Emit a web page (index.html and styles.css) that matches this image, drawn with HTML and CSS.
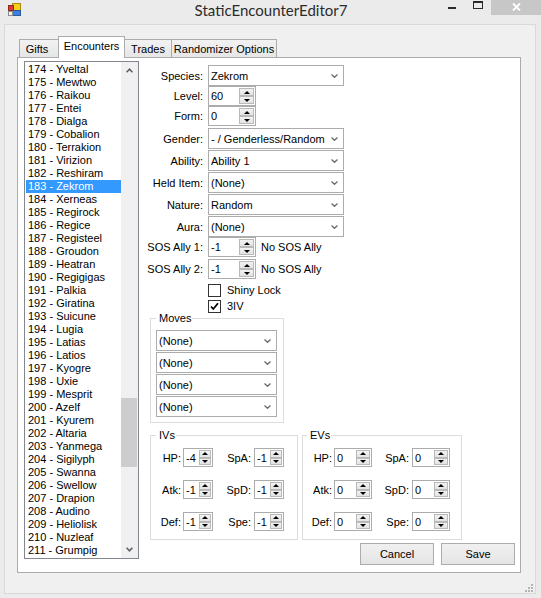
FILE: index.html
```html
<!DOCTYPE html>
<html lang="en">
<head>
<meta charset="utf-8">
<title>StaticEncounterEditor7</title>
<link rel="stylesheet" href="styles.css">
</head>
<body>
<div class="window">
  <div class="titlebar">
    <div class="tb-left">
      <svg class="app-icon" viewBox="0 0 13 13" width="13" height="13">
        <rect x="4.5" y="0.5" width="8" height="7" fill="#f5cf1a" stroke="#a88a10"/>
        <rect x="4.5" y="7.5" width="8" height="5" fill="#3f7fdc" stroke="#2b5aa3"/>
        <rect x="0.5" y="2.5" width="5" height="5" fill="#d83a2e" stroke="#8e2a22"/>
        <rect x="0.5" y="8.5" width="4" height="4" fill="#f2f2f2" stroke="#8a8a8a"/>
      </svg>
    </div>
    <div class="title">StaticEncounterEditor7</div>
    <div class="controls">
      <div class="ctl ctl-min"><span class="min-bar"></span></div>
      <div class="ctl ctl-max"><span class="max-box"></span></div>
      <div class="ctl ctl-close">
        <svg viewBox="0 0 9 8" width="9" height="8"><path d="M1 0.5 L8 7.5 M8 0.5 L1 7.5" stroke="#fff" stroke-width="1.8" fill="none"/></svg>
      </div>
    </div>
  </div>

  <div class="client">
    <div class="tabs">
      <div class="tab tab-gifts">Gifts</div>
      <div class="tab tab-enc active">Encounters</div>
      <div class="tab tab-trades">Trades</div>
      <div class="tab tab-rand">Randomizer Options</div>
    </div>

    <div class="panel">
      <div class="listbox">
        <div class="items">
          <div class="item">174 - Yveltal</div>
          <div class="item">175 - Mewtwo</div>
          <div class="item">176 - Raikou</div>
          <div class="item">177 - Entei</div>
          <div class="item">178 - Dialga</div>
          <div class="item">179 - Cobalion</div>
          <div class="item">180 - Terrakion</div>
          <div class="item">181 - Virizion</div>
          <div class="item">182 - Reshiram</div>
          <div class="item selected">183 - Zekrom</div>
          <div class="item">184 - Xerneas</div>
          <div class="item">185 - Regirock</div>
          <div class="item">186 - Regice</div>
          <div class="item">187 - Registeel</div>
          <div class="item">188 - Groudon</div>
          <div class="item">189 - Heatran</div>
          <div class="item">190 - Regigigas</div>
          <div class="item">191 - Palkia</div>
          <div class="item">192 - Giratina</div>
          <div class="item">193 - Suicune</div>
          <div class="item">194 - Lugia</div>
          <div class="item">195 - Latias</div>
          <div class="item">196 - Latios</div>
          <div class="item">197 - Kyogre</div>
          <div class="item">198 - Uxie</div>
          <div class="item">199 - Mesprit</div>
          <div class="item">200 - Azelf</div>
          <div class="item">201 - Kyurem</div>
          <div class="item">202 - Altaria</div>
          <div class="item">203 - Yanmega</div>
          <div class="item">204 - Sigilyph</div>
          <div class="item">205 - Swanna</div>
          <div class="item">206 - Swellow</div>
          <div class="item">207 - Drapion</div>
          <div class="item">208 - Audino</div>
          <div class="item">209 - Heliolisk</div>
          <div class="item">210 - Nuzleaf</div>
          <div class="item">211 - Grumpig</div>
        </div>
        <div class="scrollbar">
          <div class="sb-btn"><svg viewBox="0 0 7 5" width="7" height="5"><path d="M0.6 4.3 L3.5 1.2 L6.4 4.3" stroke="#606060" stroke-width="1.6" fill="none"/></svg></div>
          <div class="sb-track"><div class="sb-thumb"></div></div>
          <div class="sb-btn"><svg viewBox="0 0 7 5" width="7" height="5"><path d="M0.6 0.7 L3.5 3.8 L6.4 0.7" stroke="#606060" stroke-width="1.6" fill="none"/></svg></div>
        </div>
      </div>

      <div class="editor">
        <div class="row">
          <span class="lbl">Species:</span>
          <div class="combo"><span>Zekrom</span><svg class="chev" viewBox="0 0 7 4" width="7" height="4"><path d="M0.5 0.5 L3.5 3.3 L6.5 0.5" stroke="#6b6b6b" stroke-width="1.3" fill="none"/></svg></div>
        </div>
        <div class="row">
          <span class="lbl">Level:</span>
          <div class="num"><span class="num-val">60</span><span class="spin"><b class="up"><i></i></b><b class="down"><i></i></b></span></div>
        </div>
        <div class="row">
          <span class="lbl">Form:</span>
          <div class="num"><span class="num-val">0</span><span class="spin"><b class="up"><i></i></b><b class="down"><i></i></b></span></div>
        </div>
        <div class="row gap2">
          <span class="lbl">Gender:</span>
          <div class="combo"><span>- / Genderless/Random</span><svg class="chev" viewBox="0 0 7 4" width="7" height="4"><path d="M0.5 0.5 L3.5 3.3 L6.5 0.5" stroke="#6b6b6b" stroke-width="1.3" fill="none"/></svg></div>
        </div>
        <div class="row gap1">
          <span class="lbl">Ability:</span>
          <div class="combo"><span>Ability 1</span><svg class="chev" viewBox="0 0 7 4" width="7" height="4"><path d="M0.5 0.5 L3.5 3.3 L6.5 0.5" stroke="#6b6b6b" stroke-width="1.3" fill="none"/></svg></div>
        </div>
        <div class="row gap1">
          <span class="lbl">Held Item:</span>
          <div class="combo"><span>(None)</span><svg class="chev" viewBox="0 0 7 4" width="7" height="4"><path d="M0.5 0.5 L3.5 3.3 L6.5 0.5" stroke="#6b6b6b" stroke-width="1.3" fill="none"/></svg></div>
        </div>
        <div class="row gap1">
          <span class="lbl">Nature:</span>
          <div class="combo"><span>Random</span><svg class="chev" viewBox="0 0 7 4" width="7" height="4"><path d="M0.5 0.5 L3.5 3.3 L6.5 0.5" stroke="#6b6b6b" stroke-width="1.3" fill="none"/></svg></div>
        </div>
        <div class="row gap1">
          <span class="lbl">Aura:</span>
          <div class="combo"><span>(None)</span><svg class="chev" viewBox="0 0 7 4" width="7" height="4"><path d="M0.5 0.5 L3.5 3.3 L6.5 0.5" stroke="#6b6b6b" stroke-width="1.3" fill="none"/></svg></div>
        </div>
        <div class="row">
          <span class="lbl">SOS Ally 1:</span>
          <div class="num"><span class="num-val">-1</span><span class="spin"><b class="up"><i></i></b><b class="down"><i></i></b></span></div>
          <span class="note">No SOS Ally</span>
        </div>
        <div class="row gap2">
          <span class="lbl">SOS Ally 2:</span>
          <div class="num"><span class="num-val">-1</span><span class="spin"><b class="up"><i></i></b><b class="down"><i></i></b></span></div>
          <span class="note">No SOS Ally</span>
        </div>

        <div class="checks">
          <div class="check"><span class="box"></span><span>Shiny Lock</span></div>
          <div class="check"><span class="box"><svg viewBox="0 0 11 11" width="11" height="11"><path d="M2 5.5 L4.3 8 L9 2.3" stroke="#000" stroke-width="1.8" fill="none"/></svg></span><span>3IV</span></div>
        </div>

        <fieldset class="group moves">
          <legend>Moves</legend>
          <div class="combo move"><span>(None)</span><svg class="chev" viewBox="0 0 7 4" width="7" height="4"><path d="M0.5 0.5 L3.5 3.3 L6.5 0.5" stroke="#6b6b6b" stroke-width="1.3" fill="none"/></svg></div>
          <div class="combo move"><span>(None)</span><svg class="chev" viewBox="0 0 7 4" width="7" height="4"><path d="M0.5 0.5 L3.5 3.3 L6.5 0.5" stroke="#6b6b6b" stroke-width="1.3" fill="none"/></svg></div>
          <div class="combo move"><span>(None)</span><svg class="chev" viewBox="0 0 7 4" width="7" height="4"><path d="M0.5 0.5 L3.5 3.3 L6.5 0.5" stroke="#6b6b6b" stroke-width="1.3" fill="none"/></svg></div>
          <div class="combo move"><span>(None)</span><svg class="chev" viewBox="0 0 7 4" width="7" height="4"><path d="M0.5 0.5 L3.5 3.3 L6.5 0.5" stroke="#6b6b6b" stroke-width="1.3" fill="none"/></svg></div>
        </fieldset>

        <div class="stats">
          <fieldset class="group ivs">
            <legend>IVs</legend>
            <div class="stat-grid">
              <span class="slbl">HP:</span><div class="num small"><span class="num-val">-4</span><span class="spin"><b class="up"><i></i></b><b class="down"><i></i></b></span></div>
              <span class="slbl wide">SpA:</span><div class="num small"><span class="num-val">-1</span><span class="spin"><b class="up"><i></i></b><b class="down"><i></i></b></span></div>
              <span class="slbl">Atk:</span><div class="num small"><span class="num-val">-1</span><span class="spin"><b class="up"><i></i></b><b class="down"><i></i></b></span></div>
              <span class="slbl wide">SpD:</span><div class="num small"><span class="num-val">-1</span><span class="spin"><b class="up"><i></i></b><b class="down"><i></i></b></span></div>
              <span class="slbl">Def:</span><div class="num small"><span class="num-val">-1</span><span class="spin"><b class="up"><i></i></b><b class="down"><i></i></b></span></div>
              <span class="slbl wide">Spe:</span><div class="num small"><span class="num-val">-1</span><span class="spin"><b class="up"><i></i></b><b class="down"><i></i></b></span></div>
            </div>
          </fieldset>
          <fieldset class="group evs">
            <legend>EVs</legend>
            <div class="stat-grid">
              <span class="slbl">HP:</span><div class="num small"><span class="num-val">0</span><span class="spin"><b class="up"><i></i></b><b class="down"><i></i></b></span></div>
              <span class="slbl wide">SpA:</span><div class="num small"><span class="num-val">0</span><span class="spin"><b class="up"><i></i></b><b class="down"><i></i></b></span></div>
              <span class="slbl">Atk:</span><div class="num small"><span class="num-val">0</span><span class="spin"><b class="up"><i></i></b><b class="down"><i></i></b></span></div>
              <span class="slbl wide">SpD:</span><div class="num small"><span class="num-val">0</span><span class="spin"><b class="up"><i></i></b><b class="down"><i></i></b></span></div>
              <span class="slbl">Def:</span><div class="num small"><span class="num-val">0</span><span class="spin"><b class="up"><i></i></b><b class="down"><i></i></b></span></div>
              <span class="slbl wide">Spe:</span><div class="num small"><span class="num-val">0</span><span class="spin"><b class="up"><i></i></b><b class="down"><i></i></b></span></div>
            </div>
          </fieldset>
        </div>

        <div class="buttons">
          <button class="btn" type="button">Cancel</button>
          <button class="btn" type="button">Save</button>
        </div>
      </div>
    </div>

    <div class="footer">
      <svg class="grip" viewBox="0 0 9 9" width="9" height="9">
        <rect x="7" y="1" width="2" height="2" fill="#b4b4b4"/>
        <rect x="4" y="4" width="2" height="2" fill="#b4b4b4"/>
        <rect x="7" y="4" width="2" height="2" fill="#b4b4b4"/>
        <rect x="1" y="7" width="2" height="2" fill="#b4b4b4"/>
        <rect x="4" y="7" width="2" height="2" fill="#b4b4b4"/>
        <rect x="7" y="7" width="2" height="2" fill="#b4b4b4"/>
      </svg>
    </div>
  </div>
</div>
</body>
</html>
```

FILE: styles.css
```css
* { box-sizing: border-box; }
html, body { margin: 0; padding: 0; }
body {
  width: 541px;
  height: 598px;
  overflow: hidden;
  background: #ebebeb;
  font-family: "Liberation Sans", Arial, sans-serif;
  font-size: 11px;
  color: #000;
}

.window {
  width: 541px;
  height: 598px;
  display: flex;
  flex-direction: column;
  background: #ebebeb;
}

/* title bar */
.titlebar {
  height: 24px;
  flex: none;
  display: grid;
  grid-template-columns: 1fr auto 1fr;
  align-items: start;
}
.tb-left { padding: 3px 0 0 8px; }
.app-icon { display: block; }
.title {
  font-family: Lato, "Liberation Sans", sans-serif;
  font-size: 15px;
  line-height: 20px;
  color: #2b2b2b;
  white-space: nowrap;
  padding-left: 1px;
}
.controls { display: flex; justify-content: flex-end; }
.ctl { height: 15px; display: flex; justify-content: center; }
.ctl-min { width: 26px; align-items: center; }
.min-bar { width: 8px; height: 2px; background: #2b2b2b; margin-top: 1px; }
.ctl-max { width: 26px; align-items: flex-start; }
.max-box { width: 10px; height: 8px; border: 1px solid #2b2b2b; border-top-width: 2px; margin-top: 1px; }
.ctl-close { width: 50px; background: #c7c7c7; align-items: center; }
.ctl-close svg { display: block; margin-top: -1px; }

/* client area */
.client {
  flex: 1;
  margin: 0 5px 4px 4px;
  border: 1px solid #d9d9d9;
  background: #f0f0f0;
  padding: 11px 14px 0 12px;
  display: flex;
  flex-direction: column;
}

/* tabs */
.tabs {
  height: 21px;
  flex: none;
  display: flex;
  align-items: flex-end;
  padding-left: 2px;
}
.tab {
  height: 18px;
  border: 1px solid #acacac;
  border-bottom: none;
  background: linear-gradient(#f2f2f2, #e6e6e6);
  display: flex;
  align-items: center;
  justify-content: center;
  padding-top: 1px;
  white-space: nowrap;
}
.tab + .tab { margin-left: -1px; }
.tab-gifts { width: 40px; padding-right: 4px; }
.tab-enc { width: 67px; }
.tab-trades { width: 48px; }
.tab-rand { width: 106px; }
.tab.active {
  height: 22px;
  margin-bottom: -1px;
  background: #fff;
  position: relative;
  z-index: 1;
  padding-top: 0;
  padding-bottom: 3px;
}

/* tab page */
.panel {
  height: 516px;
  flex: none;
  border: 1px solid #acacac;
  background: #fff;
  display: flex;
  align-items: flex-start;
  padding: 3px 0 0 6px;
}

/* list box */
.listbox {
  width: 115px;
  height: 498px;
  flex: none;
  border: 1px solid #828790;
  display: flex;
  background: #fff;
}
.items {
  flex: 1;
  padding: 1px 0 0 1px;
  overflow: hidden;
}
.item {
  height: 13px;
  line-height: 13px;
  padding-left: 2px;
  white-space: nowrap;
}
.item.selected { background: #3399ff; color: #fff; }
.scrollbar {
  width: 17px;
  flex: none;
  background: #f0f0f0;
  display: flex;
  flex-direction: column;
}
.sb-btn {
  height: 17px;
  flex: none;
  display: flex;
  align-items: center;
  justify-content: center;
}
.sb-btn svg { display: block; }
.sb-track { flex: 1; }
.sb-thumb {
  margin: 319px 1px 0 0;
  height: 69px;
  background: #cdcdcd;
}

/* editor column */
.editor {
  flex: 1;
  display: flex;
  flex-direction: column;
  padding-top: 4px;
}
.row {
  display: flex;
  align-items: center;
  gap: 5px;
}
.row.gap1 { margin-top: 1px; }
.row.gap2 { margin-top: 2px; }
.lbl {
  width: 64px;
  flex: none;
  text-align: right;
  white-space: nowrap;
}
.note { white-space: nowrap; }

.combo {
  width: 136px;
  height: 21px;
  border: 1px solid #acacac;
  background: #fff;
  display: flex;
  align-items: center;
  padding-left: 2px;
  white-space: nowrap;
}
.combo .chev { margin-left: auto; margin-right: 5px; display: block; flex: none; }

.num {
  width: 48px;
  height: 20px;
  border: 1px solid #acacac;
  background: #fff;
  display: flex;
}
.num-val {
  flex: 1;
  display: flex;
  align-items: center;
  padding-left: 2px;
}
.spin {
  width: 16px;
  flex: none;
  display: flex;
  flex-direction: column;
  padding: 1px 1px 1px 0;
}
.spin b {
  flex: 1;
  border: 1px solid #b9b9b9;
  background: linear-gradient(#f2f2f2, #e3e3e3);
  display: flex;
  align-items: center;
  justify-content: center;
}
.spin i {
  width: 0;
  height: 0;
  border-left: 3px solid transparent;
  border-right: 3px solid transparent;
}
.spin .up i { border-bottom: 3px solid #000; }
.spin .down i { border-top: 3px solid #000; }

.num.small { width: 30px; height: 19px; }
.num.small .spin { width: 13px; }
.evs .num.small { width: 38px; }
.evs .num.small .spin { width: 15px; }

/* check boxes */
.checks { margin-top: 3px; padding-left: 69px; }
.check {
  height: 16px;
  display: flex;
  align-items: center;
  gap: 6px;
}
.box {
  width: 13px;
  height: 13px;
  border: 1px solid #333;
  background: #fff;
  display: flex;
  align-items: center;
  justify-content: center;
}
.box svg { display: block; }

/* group boxes */
.group {
  margin: 0;
  border: 1px solid #dcdcdc;
  min-width: 0;
}
.group legend {
  padding: 0 1px 0 3px;
  line-height: 13px;
  height: 13px;
}
.moves {
  margin: -2px 0 0 11px;
  width: 134px;
  padding: 5px;
  display: flex;
  flex-direction: column;
  gap: 1px;
}
.combo.move { width: 121px; }

.stats {
  display: flex;
  gap: 4px;
  margin: 6px 0 0 11px;
}
.ivs { width: 148px; padding: 6px 0 8px 7px; }
.ivs legend { margin-left: -2px; }
.evs { width: 160px; padding: 6px 0 8px 7px; }
.evs legend { margin-left: -3px; }
.stat-grid {
  display: grid;
  grid-template-columns: 25px 30px 41px 30px;
  grid-auto-rows: 19px;
  row-gap: 13px;
  align-items: center;
}
.evs .stat-grid { grid-template-columns: 24px 38px 40px 38px; }
.slbl { text-align: right; padding-right: 2px; white-space: nowrap; }
.slbl.wide { padding-right: 3px; }

/* buttons */
.buttons {
  display: flex;
  justify-content: flex-end;
  gap: 7px;
  margin-top: 3px;
  padding-right: 5px;
}
.btn {
  width: 74px;
  height: 22px;
  margin: 0;
  padding: 0;
  border: 1px solid #acacac;
  background: linear-gradient(#f0f0f0, #e5e5e5);
  font: inherit;
  color: #000;
}

/* size grip */
.footer {
  flex: 1;
  display: flex;
  justify-content: flex-end;
  align-items: flex-end;
  margin-right: -12px;
  padding-bottom: 1px;
}
.grip { display: block; }
```
